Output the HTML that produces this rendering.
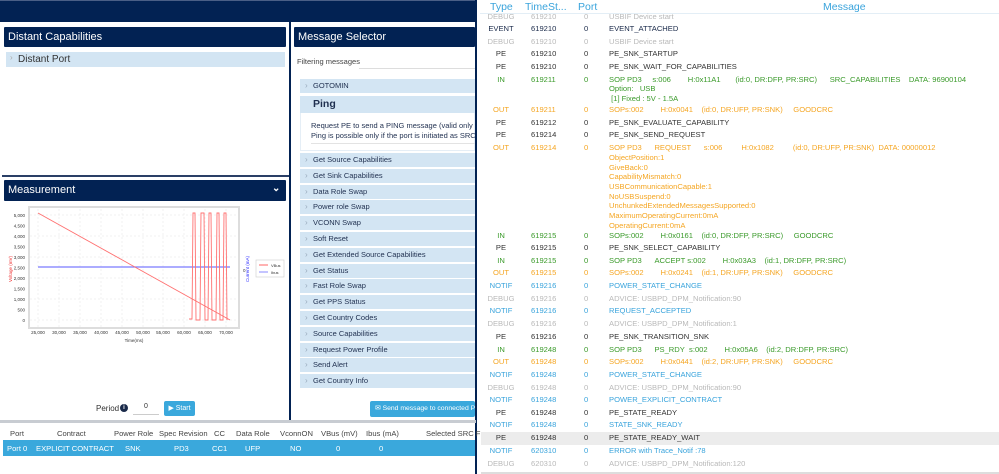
<!DOCTYPE html>
<html><head><meta charset="utf-8"><style>
*{margin:0;padding:0;box-sizing:border-box}
body{width:999px;height:474px;overflow:hidden;background:#fff;font-family:"Liberation Sans",sans-serif;position:relative}
.a{position:absolute;white-space:nowrap}
.hdr{position:absolute;background:#022253;color:#fff;font-size:11px;padding-left:4px;line-height:20px;border-radius:1px}
.item{position:absolute;left:300px;width:175px;height:14px;background:#d3e5f3;color:#1f2f4f;font-size:7.5px;line-height:14px;padding-left:13px}
.item:before{content:"›";position:absolute;left:5px;color:#9ab;font-size:8px}
.r{position:absolute;font-size:7.6px;line-height:10px;white-space:nowrap}
.t{left:480px;width:42px;text-align:center}
.ts{left:531px}
.p{left:584px}
.m{left:609px}
.g{color:#3a9a2a}.o{color:#f5a623}.k{color:#333}.n{color:#3aa4dc}.d{color:#b9b9b9}.e{color:#1a2a4a}
.th{position:absolute;font-size:7.6px;color:#444;top:429px}
.tr{position:absolute;font-size:7.6px;color:#fff;top:444px}
</style></head><body>
<div class="a" style="left:0;top:0;width:476px;height:22px;background:#022253;border-top:1px solid #4a5f86"></div>
<div class="a" style="left:475px;top:0;width:2px;height:474px;background:#022253"></div>
<div class="a" style="left:289px;top:22px;width:2px;height:400px;background:#022253"></div>

<div class="hdr" style="left:4px;top:27px;width:282px;height:20px">Distant Capabilities</div>
<div class="a" style="left:6px;top:52px;width:279px;height:15px;background:#d3e5f3;font-size:10px;line-height:15px;color:#333;padding-left:12px">Distant Port</div>
<div class="a" style="left:10px;top:53px;font-size:8px;color:#aaa">›</div>
<div class="a" style="left:2px;top:175px;width:287px;height:2px;background:#2a3f66"></div>

<div class="hdr" style="left:4px;top:180px;width:282px;height:21px;line-height:21px">Measurement</div>
<div class="a" style="left:272px;top:183px;color:#fff;font-size:10px;font-weight:bold">⌄</div>

<svg class="a" style="left:0;top:203px" width="290" height="145">
 <rect x="29" y="4" width="210" height="121" fill="#fff" stroke="#ddd" stroke-width="2"/>
 <g stroke="#e6e6e6" stroke-dasharray="2,2" stroke-width="0.6">
  <line x1="38" y1="6" x2="38" y2="124"/><line x1="59" y1="6" x2="59" y2="124"/><line x1="80" y1="6" x2="80" y2="124"/><line x1="101" y1="6" x2="101" y2="124"/><line x1="122" y1="6" x2="122" y2="124"/><line x1="143" y1="6" x2="143" y2="124"/><line x1="163" y1="6" x2="163" y2="124"/><line x1="184" y1="6" x2="184" y2="124"/><line x1="205" y1="6" x2="205" y2="124"/><line x1="226" y1="6" x2="226" y2="124"/>
  <line x1="30" y1="12" x2="238" y2="12"/><line x1="30" y1="33" x2="238" y2="33"/><line x1="30" y1="54" x2="238" y2="54"/><line x1="30" y1="75" x2="238" y2="75"/><line x1="30" y1="96" x2="238" y2="96"/><line x1="30" y1="117" x2="238" y2="117"/>
 </g>
 <g font-size="4.5" fill="#333" text-anchor="end" font-family="Liberation Sans">
  <text x="25" y="14">5,000</text><text x="25" y="24.5">4,500</text><text x="25" y="35">4,000</text><text x="25" y="45.5">3,500</text><text x="25" y="56">3,000</text><text x="25" y="66.5">2,500</text><text x="25" y="77">2,000</text><text x="25" y="87.5">1,500</text><text x="25" y="98">1,000</text><text x="25" y="108.5">500</text><text x="25" y="119">0</text>
 </g>
 <g font-size="4.5" fill="#333" text-anchor="middle" font-family="Liberation Sans">
  <text x="38" y="131">25,000</text><text x="59" y="131">30,000</text><text x="80" y="131">35,000</text><text x="101" y="131">40,000</text><text x="122" y="131">45,000</text><text x="143" y="131">50,000</text><text x="163" y="131">55,000</text><text x="184" y="131">60,000</text><text x="205" y="131">65,000</text><text x="226" y="131">70,000</text>
  <text x="134" y="139">Time(ms)</text>
 </g>
 <text x="12" y="66" font-size="4.5" fill="#e33" text-anchor="middle" transform="rotate(-90 12 66)" font-family="Liberation Sans">Voltage (mV)</text>
 <text x="249" y="66" font-size="4.5" fill="#33f" text-anchor="middle" transform="rotate(-90 249 66)" font-family="Liberation Sans">Current (mA)</text>
 <text x="243" y="69" font-size="4.5" fill="#333" font-family="Liberation Sans">0</text>
 <line x1="38" y1="64" x2="230" y2="64" stroke="#7b7bff" stroke-width="1.2"/>
 <polyline fill="none" stroke="#ff7070" stroke-width="0.9" points="38,10 230,117"/>
 <polyline fill="none" stroke="#ff7070" stroke-width="0.9" points="189,116 192,116 193,10 195,10 196,117 200,117 201,10 204,10 205,117 208,117 209,10 211,10 212,117 216,117 217,10 219,10 220,117 223,117 224,10 226,10 227,117"/>
 <rect x="256" y="57" width="28" height="17" fill="#fff" stroke="#ccc" stroke-width="0.6"/>
 <line x1="259" y1="62" x2="268" y2="62" stroke="#f66"/><line x1="259" y1="69" x2="268" y2="69" stroke="#88f"/>
 <text x="271" y="64" font-size="4" fill="#333" font-family="Liberation Sans">VBus</text><text x="271" y="71" font-size="4" fill="#333" font-family="Liberation Sans">Ibus</text>
</svg>

<div class="a" style="left:96px;top:404px;font-size:8px;color:#333">Period</div>
<div class="a" style="left:120px;top:404px;width:8px;height:8px;border-radius:50%;background:#1a2a4a;color:#fff;font-size:6px;text-align:center;line-height:8px;font-weight:bold">i</div>
<div class="a" style="left:133px;top:403px;width:26px;height:12px;border-bottom:1px solid #ccc;font-size:7px;text-align:center;color:#333">0</div>
<div class="a" style="left:164px;top:401px;width:31px;height:15px;background:#3aa8dc;border-radius:2px;color:#fff;font-size:7px;line-height:15px;text-align:center">▶ Start</div>

<div class="hdr" style="left:294px;top:27px;width:181px;height:20px">Message Selector</div>
<div class="a" style="left:297px;top:57px;font-size:7.5px;color:#444">Filtering messages</div>
<div class="a" style="left:359px;top:68px;width:116px;height:1px;background:#ddd"></div>
<div class="item" style="top:79px">GOTOMIN</div>
<div class="a" style="left:300px;top:96px;width:175px;height:17px;background:#d3e5f3;color:#1f2f4f;font-size:10.5px;font-weight:bold;line-height:17px;padding-left:13px">Ping</div>
<div class="a" style="left:300px;top:113px;width:175px;height:38px;border:1px solid #e5eef6;border-top:none"></div>
<div class="a" style="left:311px;top:121px;width:164px;overflow:hidden;font-size:7.5px;color:#1f2f4f;line-height:9.5px">Request PE to send a PING message (valid only fo<br>Ping is possible only if the port is initiated as SRC</div>
<div class="a" style="left:311px;top:143px;width:164px;height:1px;background:#e3e3e3"></div>
<div class="item" style="top:153px">Get Source Capabilities</div>
<div class="item" style="top:169px">Get Sink Capabilities</div>
<div class="item" style="top:185px">Data Role Swap</div>
<div class="item" style="top:200px">Power role Swap</div>
<div class="item" style="top:216px">VCONN Swap</div>
<div class="item" style="top:232px">Soft Reset</div>
<div class="item" style="top:248px">Get Extended Source Capabilities</div>
<div class="item" style="top:264px">Get Status</div>
<div class="item" style="top:279px">Fast Role Swap</div>
<div class="item" style="top:295px">Get PPS Status</div>
<div class="item" style="top:311px">Get Country Codes</div>
<div class="item" style="top:327px">Source Capabilities</div>
<div class="item" style="top:343px">Request Power Profile</div>
<div class="item" style="top:358px">Send Alert</div>
<div class="item" style="top:374px">Get Country Info</div>
<div class="a" style="left:370px;top:401px;width:105px;height:16px;background:#3aa8dc;border-radius:2px;color:#fff;font-size:6.8px;line-height:16px;padding-left:5px;overflow:hidden">✉ Send message to connected Po</div>

<div class="a" style="left:0;top:420px;width:476px;height:3px;background:#c8ccd2"></div>
<div class="th" style="left:10px">Port</div>
<div class="th" style="left:57px">Contract</div>
<div class="th" style="left:114px">Power Role</div>
<div class="th" style="left:159px">Spec Revision</div>
<div class="th" style="left:214px">CC</div>
<div class="th" style="left:236px">Data Role</div>
<div class="th" style="left:280px">VconnON</div>
<div class="th" style="left:321px">VBus (mV)</div>
<div class="th" style="left:366px">Ibus (mA)</div>
<div class="th" style="left:426px">Selected SRC F</div>
<div class="a" style="left:3px;top:440px;width:472px;height:16px;background:#3aa8dc"></div>
<div class="tr" style="left:7px">Port 0</div>
<div class="tr" style="left:36px">EXPLICIT CONTRACT</div>
<div class="tr" style="left:125px">SNK</div>
<div class="tr" style="left:174px">PD3</div>
<div class="tr" style="left:212px">CC1</div>
<div class="tr" style="left:245px">UFP</div>
<div class="tr" style="left:290px">NO</div>
<div class="tr" style="left:336px">0</div>
<div class="tr" style="left:379px">0</div>

<div class="a" style="left:490px;top:1px;font-size:10.5px;color:#3aa4dc">Type</div>
<div class="a" style="left:525px;top:1px;font-size:10.5px;color:#3aa4dc">TimeSt...</div>
<div class="a" style="left:578px;top:1px;font-size:10.5px;color:#3aa4dc">Port</div>
<div class="a" style="left:823px;top:1px;font-size:10.5px;color:#3aa4dc">Message</div>
<div class="a" style="left:480px;top:13px;width:519px;height:1px;background:#e3eef6"></div>
<div class="a" style="left:481px;top:432px;width:518px;height:13px;background:#ececec"></div>
<div class="a" style="left:481px;top:472px;width:518px;height:2px;background:#ddd"></div>

<div class="r d" style="top:12px"><span class="r t">DEBUG</span><span class="r ts">619210</span><span class="r p">0</span><span class="r m">USBIF Device start</span></div>
<div class="r e" style="top:24px"><span class="r t">EVENT</span><span class="r ts">619210</span><span class="r p">0</span><span class="r m">EVENT_ATTACHED</span></div>
<div class="r d" style="top:37px"><span class="r t">DEBUG</span><span class="r ts">619210</span><span class="r p">0</span><span class="r m">USBIF Device start</span></div>
<div class="r k" style="top:49px"><span class="r t">PE</span><span class="r ts">619210</span><span class="r p">0</span><span class="r m">PE_SNK_STARTUP</span></div>
<div class="r k" style="top:62px"><span class="r t">PE</span><span class="r ts">619210</span><span class="r p">0</span><span class="r m">PE_SNK_WAIT_FOR_CAPABILITIES</span></div>
<div class="r g" style="top:75px"><span class="r t">IN</span><span class="r ts">619211</span><span class="r p">0</span><span class="r m">SOP PD3&nbsp;&nbsp;&nbsp;&nbsp;&nbsp;s:006&nbsp;&nbsp;&nbsp;&nbsp;&nbsp;&nbsp;&nbsp;&nbsp;H:0x11A1&nbsp;&nbsp;&nbsp;&nbsp;&nbsp;&nbsp;&nbsp;(id:0, DR:DFP, PR:SRC)&nbsp;&nbsp;&nbsp;&nbsp;&nbsp;&nbsp;SRC_CAPABILITIES&nbsp;&nbsp;&nbsp;&nbsp;DATA: 96900104</span></div>
<div class="r g m" style="top:84px">Option:&nbsp;&nbsp;&nbsp;USB</div>
<div class="r g m" style="top:94px">&nbsp;[1] Fixed : 5V - 1.5A</div>
<div class="r o" style="top:105px"><span class="r t">OUT</span><span class="r ts">619211</span><span class="r p">0</span><span class="r m">SOPs:002&nbsp;&nbsp;&nbsp;&nbsp;&nbsp;&nbsp;&nbsp;&nbsp;H:0x0041&nbsp;&nbsp;&nbsp;&nbsp;(id:0, DR:UFP, PR:SNK)&nbsp;&nbsp;&nbsp;&nbsp;&nbsp;GOODCRC</span></div>
<div class="r k" style="top:118px"><span class="r t">PE</span><span class="r ts">619212</span><span class="r p">0</span><span class="r m">PE_SNK_EVALUATE_CAPABILITY</span></div>
<div class="r k" style="top:130px"><span class="r t">PE</span><span class="r ts">619214</span><span class="r p">0</span><span class="r m">PE_SNK_SEND_REQUEST</span></div>
<div class="r o" style="top:143px"><span class="r t">OUT</span><span class="r ts">619214</span><span class="r p">0</span><span class="r m">SOP PD3&nbsp;&nbsp;&nbsp;&nbsp;&nbsp;&nbsp;REQUEST&nbsp;&nbsp;&nbsp;&nbsp;&nbsp;&nbsp;s:006&nbsp;&nbsp;&nbsp;&nbsp;&nbsp;&nbsp;&nbsp;&nbsp;&nbsp;H:0x1082&nbsp;&nbsp;&nbsp;&nbsp;&nbsp;&nbsp;&nbsp;&nbsp;&nbsp;(id:0, DR:UFP, PR:SNK)&nbsp;&nbsp;DATA: 00000012</span></div>
<div class="r o m" style="top:153px;line-height:9.65px">ObjectPosition:1<br>GiveBack:0<br>CapabilityMismatch:0<br>USBCommunicationCapable:1<br>NoUSBSuspend:0<br>UnchunkedExtendedMessagesSupported:0<br>MaximumOperatingCurrent:0mA<br>OperatingCurrent:0mA</div>
<div class="r g" style="top:231px"><span class="r t">IN</span><span class="r ts">619215</span><span class="r p">0</span><span class="r m">SOPs:002&nbsp;&nbsp;&nbsp;&nbsp;&nbsp;&nbsp;&nbsp;&nbsp;H:0x0161&nbsp;&nbsp;&nbsp;&nbsp;(id:0, DR:DFP, PR:SRC)&nbsp;&nbsp;&nbsp;&nbsp;&nbsp;GOODCRC</span></div>
<div class="r k" style="top:243px"><span class="r t">PE</span><span class="r ts">619215</span><span class="r p">0</span><span class="r m">PE_SNK_SELECT_CAPABILITY</span></div>
<div class="r g" style="top:256px"><span class="r t">IN</span><span class="r ts">619215</span><span class="r p">0</span><span class="r m">SOP PD3&nbsp;&nbsp;&nbsp;&nbsp;&nbsp;&nbsp;ACCEPT s:002&nbsp;&nbsp;&nbsp;&nbsp;&nbsp;&nbsp;&nbsp;&nbsp;H:0x03A3&nbsp;&nbsp;&nbsp;&nbsp;(id:1, DR:DFP, PR:SRC)</span></div>
<div class="r o" style="top:268px"><span class="r t">OUT</span><span class="r ts">619215</span><span class="r p">0</span><span class="r m">SOPs:002&nbsp;&nbsp;&nbsp;&nbsp;&nbsp;&nbsp;&nbsp;&nbsp;H:0x0241&nbsp;&nbsp;&nbsp;&nbsp;(id:1, DR:UFP, PR:SNK)&nbsp;&nbsp;&nbsp;&nbsp;&nbsp;GOODCRC</span></div>
<div class="r n" style="top:281px"><span class="r t">NOTIF</span><span class="r ts">619216</span><span class="r p">0</span><span class="r m">POWER_STATE_CHANGE</span></div>
<div class="r d" style="top:294px"><span class="r t">DEBUG</span><span class="r ts">619216</span><span class="r p">0</span><span class="r m">ADVICE: USBPD_DPM_Notification:90</span></div>
<div class="r n" style="top:306px"><span class="r t">NOTIF</span><span class="r ts">619216</span><span class="r p">0</span><span class="r m">REQUEST_ACCEPTED</span></div>
<div class="r d" style="top:319px"><span class="r t">DEBUG</span><span class="r ts">619216</span><span class="r p">0</span><span class="r m">ADVICE: USBPD_DPM_Notification:1</span></div>
<div class="r k" style="top:332px"><span class="r t">PE</span><span class="r ts">619216</span><span class="r p">0</span><span class="r m">PE_SNK_TRANSITION_SNK</span></div>
<div class="r g" style="top:345px"><span class="r t">IN</span><span class="r ts">619248</span><span class="r p">0</span><span class="r m">SOP PD3&nbsp;&nbsp;&nbsp;&nbsp;&nbsp;&nbsp;PS_RDY&nbsp;&nbsp;s:002&nbsp;&nbsp;&nbsp;&nbsp;&nbsp;&nbsp;&nbsp;&nbsp;H:0x05A6&nbsp;&nbsp;&nbsp;&nbsp;(id:2, DR:DFP, PR:SRC)</span></div>
<div class="r o" style="top:357px"><span class="r t">OUT</span><span class="r ts">619248</span><span class="r p">0</span><span class="r m">SOPs:002&nbsp;&nbsp;&nbsp;&nbsp;&nbsp;&nbsp;&nbsp;&nbsp;H:0x0441&nbsp;&nbsp;&nbsp;&nbsp;(id:2, DR:UFP, PR:SNK)&nbsp;&nbsp;&nbsp;&nbsp;&nbsp;GOODCRC</span></div>
<div class="r n" style="top:370px"><span class="r t">NOTIF</span><span class="r ts">619248</span><span class="r p">0</span><span class="r m">POWER_STATE_CHANGE</span></div>
<div class="r d" style="top:383px"><span class="r t">DEBUG</span><span class="r ts">619248</span><span class="r p">0</span><span class="r m">ADVICE: USBPD_DPM_Notification:90</span></div>
<div class="r n" style="top:395px"><span class="r t">NOTIF</span><span class="r ts">619248</span><span class="r p">0</span><span class="r m">POWER_EXPLICIT_CONTRACT</span></div>
<div class="r k" style="top:408px"><span class="r t">PE</span><span class="r ts">619248</span><span class="r p">0</span><span class="r m">PE_STATE_READY</span></div>
<div class="r n" style="top:420px"><span class="r t">NOTIF</span><span class="r ts">619248</span><span class="r p">0</span><span class="r m">STATE_SNK_READY</span></div>
<div class="r k" style="top:433px"><span class="r t">PE</span><span class="r ts">619248</span><span class="r p">0</span><span class="r m">PE_STATE_READY_WAIT</span></div>
<div class="r n" style="top:446px"><span class="r t">NOTIF</span><span class="r ts">620310</span><span class="r p">0</span><span class="r m">ERROR with Trace_Notif :78</span></div>
<div class="r d" style="top:459px"><span class="r t">DEBUG</span><span class="r ts">620310</span><span class="r p">0</span><span class="r m">ADVICE: USBPD_DPM_Notification:120</span></div>
</body></html>
